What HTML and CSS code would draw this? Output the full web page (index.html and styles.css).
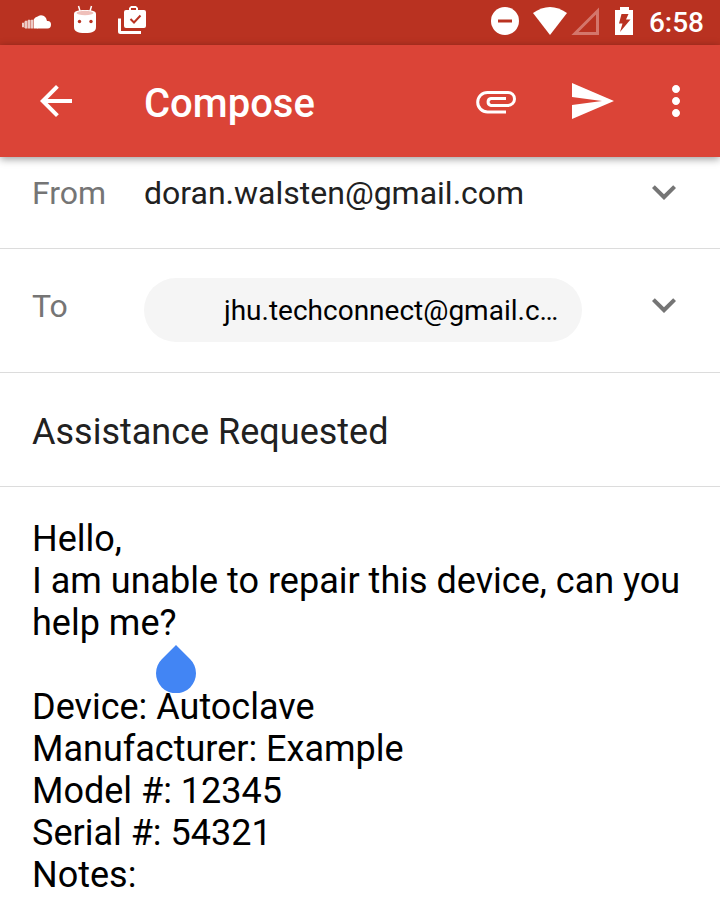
FILE: index.html
```html
<!DOCTYPE html>
<html lang="en">
<head>
<meta charset="utf-8">
<meta name="viewport" content="width=device-width, initial-scale=1">
<title>Compose</title>
<link rel="stylesheet" href="styles.css">
</head>
<body>
<div class="status-bar">
  <div class="status-group notifications">
    <svg width="30" height="28" viewBox="0 0 30 28" aria-hidden="true">
      <path fill="#fff" d="M15 10Q18 7 22 9Q24.500 10.500 25 14Q29 13.500 29 17.500Q29 21.500 25.500 21.500H15Z"/>
      <path fill="#fff" fill-opacity=".75" d="M0 16q1-1 2 0v4q-1 .8-2 0ZM3 14q1-1 2 0v7.500H3ZM6 13q1-1 2 0v8.500H6ZM9 13q1-1 2 0v8.500H9Z"/>
      <path fill="#fff" d="M12 12q1-2 3.500-2.500v12H12Z"/>
      <path stroke="#fff" stroke-opacity=".45" d="M2.500 14.500v6.500M5.500 13.500v8M8.500 13v8.500M11.500 12.500v9"/>
    </svg>
    <svg width="24" height="32" viewBox="0 0 24 32" aria-hidden="true">
      <path stroke="#fff" stroke-width="1.500" d="M5.500 1l1.500 5M18.500 1l-1.500 5"/>
      <path fill="#fff" d="M1 9C1 6 5 5 12 5s11 1 11 4v13c0 4-3 6-11 6S1 26 1 22Z"/>
      <ellipse cx="12" cy="8" rx="8.500" ry="2.200" fill="#efc0ba"/>
      <circle cx="6.500" cy="16.500" r="1.700" fill="#b93221"/><circle cx="18" cy="16.500" r="1.700" fill="#b93221"/>
    </svg>
    <svg width="28" height="30" viewBox="0 0 28 30" aria-hidden="true">
      <path fill="none" stroke="#fff" stroke-width="3" d="M1.500 12.500v13q0 1 1 1H23"/>
      <path fill="#fff" fill-rule="evenodd" d="M11 4V2l2-2h5l2 2v2h6q2 0 2 2v14q0 2-2 2H8q-2 0-2-2V6q0-2 2-2ZM13 4h5V2h-5Z"/>
      <path fill="none" stroke="#b93221" stroke-width="2" d="M12.500 13l3.500 3.500 6.500-7"/>
    </svg>
  </div>
  <div class="status-group">
    <svg width="28" height="28" viewBox="0 0 28 28" aria-hidden="true"><circle cx="14" cy="14" r="14" fill="#fff"/><path fill="#b93221" d="M7 12.500h14v3H7z"/></svg>
    <svg class="wifi" width="34" height="28" viewBox="0 0 34 28" aria-hidden="true"><path fill="#fff" d="M0 6Q17-6 34 6L17 28Z"/></svg>
    <svg class="signal" width="28" height="28" viewBox="0 0 28 28" aria-hidden="true"><path fill="none" stroke="#d4766b" stroke-width="3" d="M4 26.500H26.500V4Z"/></svg>
    <svg class="battery" width="18" height="28" viewBox="0 0 18 28" aria-hidden="true"><path fill="#fff" d="M5 0h9v3h4v25H0V3h5Z"/><path fill="#b93221" d="M6.500 7h7L11 12.500h4.500L5 25l2.500-8.500H4Z"/></svg>
    <time class="clock">6:58</time>
  </div>
</div>

<header class="app-bar">
  <button type="button" class="icon-button" aria-label="Back">
    <svg width="48" height="48" viewBox="0 0 24 24"><path fill="#fff" d="M20 11H7.830l5.590-5.590L12 4l-8 8 8 8 1.410-1.410L7.830 13H20v-2z"/></svg>
  </button>
  <h1 class="title">Compose</h1>
  <button type="button" class="icon-button" aria-label="Attach file">
    <svg width="48" height="48" viewBox="0 0 48 48"><path fill="none" stroke="#fff" stroke-width="3" d="M34 35H15.500A9.800 9.800 0 0 1 15.500 15.400H36A6.500 6.500 0 0 1 36 28.400H19A3.500 3.500 0 0 1 19 21.500H34"/></svg>
  </button>
  <button type="button" class="icon-button" aria-label="Send">
    <svg width="48" height="48" viewBox="0 0 48 48"><path fill="#fff" d="M4 6L46 24 4 42V28L34 24 4 20Z"/></svg>
  </button>
  <button type="button" class="icon-button" aria-label="More options">
    <svg width="48" height="48" viewBox="0 0 24 24"><path fill="#fff" d="M12 8c1.100 0 2-.9 2-2s-.9-2-2-2-2 .9-2 2 .9 2 2 2zm0 2c-1.100 0-2 .9-2 2s.9 2 2 2 2-.9 2-2-.9-2-2-2zm0 6c-1.100 0-2 .9-2 2s.9 2 2 2 2-.9 2-2-.9-2-2-2z"/></svg>
  </button>
</header>

<main class="form">
  <div class="row from-row">
    <label class="label" for="from">From</label>
    <select id="from" class="account"><option>doran.walsten@gmail.com</option></select>
    <svg class="chevron" width="48" height="54" viewBox="0 0 24 27" aria-hidden="true"><path fill="#757575" d="M7.410 10.090L12 14.670l4.590-4.580L18 11.500l-6 6-6-6z"/></svg>
  </div>
  <div class="row to-row">
    <span class="label">To</span>
    <button type="button" class="chip">jhu.techconnect@gmail.c…</button>
    <button type="button" class="chevron" aria-label="Add Cc/Bcc">
      <svg width="48" height="54" viewBox="0 0 24 27"><path fill="#757575" d="M7.410 10.090L12 14.670l4.590-4.580L18 11.500l-6 6-6-6z"/></svg>
    </button>
  </div>
  <div class="row subject-row">
    <input class="subject" type="text" aria-label="Subject" value="Assistance Requested">
  </div>
  <div class="message">
    <textarea class="body-text" aria-label="Message" rows="9" spellcheck="false">Hello,
I am unable to repair this device, can you help me?

Device: Autoclave
Manufacturer: Example
Model #: 12345
Serial #: 54321
Notes:</textarea>
    <svg class="cursor-handle" width="40" height="48" viewBox="0 0 40 48" aria-hidden="true"><path fill="#4285f4" d="M20 0L34 14A20 20 0 1 1 6 14Z"/></svg>
  </div>
</main>
</body>
</html>
```
FILE: styles.css
```css
* {
  box-sizing: border-box;
}

body {
  margin: 0;
  min-height: 100vh;
  display: flex;
  flex-direction: column;
  background: #fff;
  color: #000;
  font-family: Roboto, "Liberation Sans", sans-serif;
}

button,
input,
select,
textarea {
  margin: 0;
  padding: 0;
  border: 0;
  background: none;
  color: inherit;
  font-family: inherit;
  outline: none;
}

svg {
  display: block;
  flex: none;
}

.status-bar {
  display: flex;
  align-items: center;
  justify-content: space-between;
  height: 45px;
  padding: 0 16px 4px 22px;
  background: #b93221;
  color: #fff;
}

.status-group {
  display: flex;
  align-items: center;
}

.notifications {
  gap: 21px;
}

.wifi {
  margin-left: 14px;
}

.signal {
  margin-left: 4px;
}

.battery {
  margin: 0 16px;
}

.clock {
  padding-top: 4px;
  font-size: 28px;
  line-height: 32px;
  font-weight: 500;
}

.app-bar {
  position: relative;
  z-index: 1;
  display: flex;
  align-items: center;
  height: 112px;
  padding: 0 20px 0 32px;
  background: #db4437;
  color: #fff;
  box-shadow: 0 2px 8px rgba(0, 0, 0, 0.4);
}

.title {
  flex: 1;
  margin: 0;
  padding: 6px 0 0 64px;
  font-size: 40px;
  line-height: 48px;
  font-weight: 500;
}

.icon-button + .icon-button {
  margin-left: 48px;
}

.icon-button:last-child {
  margin-left: 36px;
}

.row {
  display: flex;
  align-items: flex-start;
  border-bottom: 1px solid #dcdcdc;
}

.from-row {
  padding: 8px 32px 27px;
}

.to-row {
  padding: 29px 32px 30px;
}

.subject-row {
  padding: 38px 32px 33px;
}

.label {
  flex: none;
  width: 112px;
  color: #757575;
  font-size: 32px;
  line-height: 56px;
}

.account {
  flex: 1;
  min-width: 0;
  height: 56px;
  appearance: none;
  color: #212121;
  font-size: 32px;
}

.chevron {
  height: 54px;
  margin-left: auto;
}

.chip {
  height: 64px;
  padding: 0 24px 0 80px;
  border-radius: 32px;
  background: #f5f5f5;
  font-size: 28px;
}

.subject {
  width: 100%;
  height: 42px;
  color: #212121;
  font-size: 36px;
}

.message {
  position: relative;
  padding: 31px 32px 0;
}

.body-text {
  display: block;
  width: 100%;
  resize: none;
  overflow: hidden;
  font-size: 36px;
  line-height: 42px;
}

.cursor-handle {
  position: absolute;
  top: 158px;
  left: 156px;
}
```
